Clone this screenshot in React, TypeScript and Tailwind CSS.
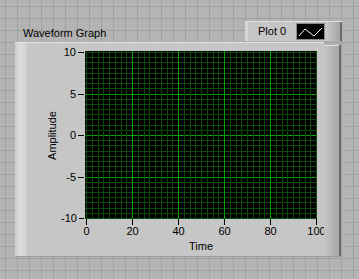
const X_LABELS = ["0", "20", "40", "60", "80", "100"];
const Y_LABELS = ["10", "5", "0", "-5", "-10"];

function PlotGrid() {
	const w = 232;
	const h = 168;
	const cols = Array.from({ length: 41 }, (_, i) => ({
		x: Math.round(1 + (i * 230) / 40) + 0.5,
		major: i % 8 === 0,
	}));
	const rows = Array.from({ length: 33 }, (_, j) => ({
		y: Math.round(1 + (j * 166) / 32) + 0.5,
		major: j % 8 === 0,
	}));
	return (
		<svg width={w} height={h} className="block bg-black">
			{rows.map((r, j) => (
				<line
					key={`r${j}`}
					x1={0}
					x2={w}
					y1={r.y}
					y2={r.y}
					stroke={r.major && j !== 0 && j !== 32 ? "#00a000" : "#0d4a0d"}
					strokeWidth={1}
				/>
			))}
			{cols.map((c, i) => (
				<line
					key={`c${i}`}
					x1={c.x}
					x2={c.x}
					y1={0}
					y2={h}
					stroke={c.major && i !== 0 && i !== 40 ? "#00a000" : "#0d4a0d"}
					strokeWidth={1}
				/>
			))}
		</svg>
	);
}

function Legend() {
	return (
		<div className="mr-[17px] flex h-[20px] w-[97px] border-t border-[#dedede]">
			<div className="w-[3px] bg-[#d6d6d6]" />
			<div className="flex w-[79px] items-start bg-[#c6c6c6]">
				<span className="mt-[3px] ml-[10px] leading-[13px]">Plot 0</span>
				<div className="mt-[1px] ml-auto mr-[2px] h-[17px] w-[29px] border border-[#8a8a8a] bg-black">
					<svg width={27} height={15} className="block">
						<polyline
							points="2,12 8,5 17,12 25,4"
							fill="none"
							stroke="white"
							strokeWidth={1}
						/>
					</svg>
				</div>
			</div>
			<div className="w-[13px] bg-[linear-gradient(90deg,#c6c6c6,#a4a4a4)]" />
			<div className="w-[2px] bg-[#6a6a6a]" />
		</div>
	);
}

export default function App() {
	return (
		<div className="h-[279px] w-[359px] overflow-hidden bg-[#b4b4b4] bg-[linear-gradient(to_right,#a1a1a1_1px,transparent_1px),linear-gradient(to_bottom,#a1a1a1_1px,transparent_1px)] bg-[size:12px_12px] bg-[position:5px_6px] pt-[21px] font-['Liberation_Sans',Arial,sans-serif] text-[11px] text-black">
			<div className="flex h-[21px] items-start">
				<span className="mt-[6px] ml-[23px] leading-[13px]">Waveform Graph</span>
				<div className="ml-auto">
					<Legend />
				</div>
			</div>

			<div className="ml-[15px] flex h-[215px] w-[326px] border-b border-[#9a9a9a]">
				<div className="w-[12px] border-t border-[#e4e4e4] bg-[linear-gradient(90deg,#cdcdcd,#dddddd_45%,#d0d0d0)]" />
				<div className="flex w-[297px] flex-col border-t border-[#e0e0e0] bg-[#c6c6c6] pt-[8px]">
					<div className="flex">
						<div className="ml-[16px] flex h-[168px] w-[18px] items-center justify-center">
							<span className="-rotate-90 whitespace-nowrap leading-[13px]">Amplitude</span>
						</div>
						<div className="h-[168px] w-[24px]">
							<div className="mt-[-5px] flex h-[179px] flex-col justify-between">
								{Y_LABELS.map((label) => (
									<div key={label} className="flex h-[13px] items-center justify-end gap-[2px] pr-[1px]">
										<span className="leading-[13px]">{label}</span>
										<span className="h-px w-[6px] bg-black" />
									</div>
								))}
							</div>
						</div>
						<PlotGrid />
					</div>
					<div className="ml-[47px] flex w-[255px] justify-between">
						{X_LABELS.map((label) => (
							<div key={label} className="flex w-[25px] flex-col items-center">
								<span className="h-[6px] w-px bg-black" />
								<span className="leading-[13px]">{label}</span>
							</div>
						))}
					</div>
					<div className="mt-[2px] ml-[58px] w-[232px] text-center leading-[13px]">Time</div>
				</div>
				<div className="mt-[3px] w-[15px] border-t border-[#dadada] bg-[linear-gradient(90deg,#c6c6c6,#a6a6a6)]" />
				<div className="mt-[3px] w-[2px] bg-[#6a6a6a]" />
			</div>
		</div>
	);
}
